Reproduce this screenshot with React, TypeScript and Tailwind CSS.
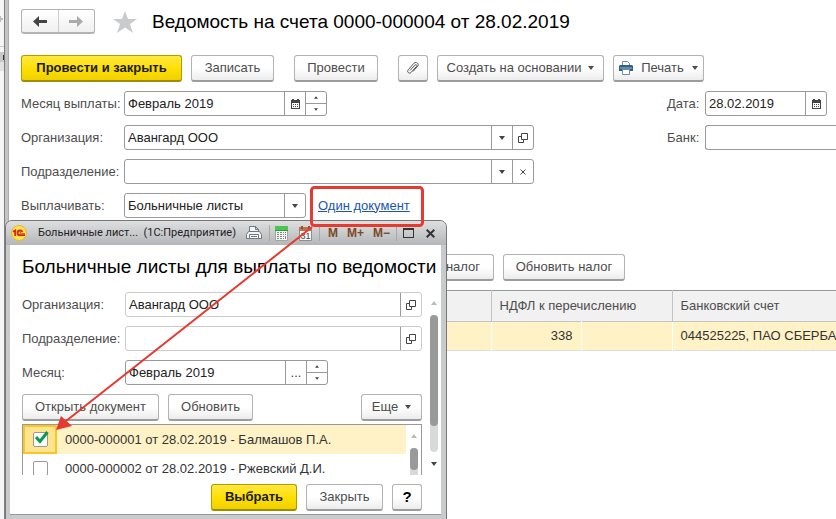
import type { ReactNode } from 'react'
import clsx from 'clsx'

const BUTTON =
  'flex h-[27px] shrink-0 items-center justify-center rounded-[3px] border border-b-2 whitespace-nowrap'
const PLAIN = 'border-[#b3b3b3] border-b-[#9c9c9c] bg-linear-to-b from-white from-50% to-[#ececec] text-[#4d4d4d]'
const YELLOW = 'border-[#b39b00] border-b-[#a08c00] bg-linear-to-b from-[#ffe838] via-[#ffe000] to-[#f0d000] font-bold text-[#1a1a1a]'

type ButtonProps = {
  children: ReactNode
  className?: string
  primary?: boolean
  label?: string
}

function Button({ children, className, primary, label }: ButtonProps) {
  return (
    <button type="button" aria-label={label} className={clsx(BUTTON, primary ? YELLOW : PLAIN, className)}>
      {children}
    </button>
  )
}

function Caret({ up, small, className }: { up?: boolean; small?: boolean; className?: string }) {
  return (
    <svg
      viewBox="0 0 6 4"
      width={small ? 4 : 6}
      height={small ? 3 : 4}
      className={clsx('shrink-0', className)}
      fill="currentColor"
      aria-hidden="true"
    >
      <path d={up ? 'M0 4h6L3 0z' : 'M0 0h6L3 4z'} />
    </svg>
  )
}

function CalendarIcon() {
  return (
    <svg viewBox="0 0 9 10" width="9" height="10" aria-hidden="true" shapeRendering="crispEdges">
      <path fill="#444" d="M0 1h1V0h2v1h3V0h2v1h1v2H0zM0 4h1v5h7V4h1v6H0zM0 3h9v1H0z" />
      <path fill="#444" d="M2 5h1v1H2zM4 5h1v1H4zM6 5h1v1H6zM2 7h1v1H2zM4 7h1v1H4zM6 7h1v1H6z" />
    </svg>
  )
}

function OpenIcon() {
  return (
    <svg viewBox="0 0 10 10" width="10" height="10" fill="none" stroke="#444" aria-hidden="true">
      <path d="M3.500.5h6v6h-6zM3 3.500H.5v6h5V7" />
    </svg>
  )
}

function SideButton({ label, children }: { label: string; children: ReactNode }) {
  return (
    <button
      type="button"
      aria-label={label}
      className="flex w-[21px] shrink-0 items-center justify-center border-l border-[#999] text-[#444]"
    >
      {children}
    </button>
  )
}

function Spinner() {
  return (
    <span className="flex w-[21px] shrink-0 flex-col border-l border-[#999] text-[#444]">
      <button type="button" aria-label="Увеличить" className="flex flex-1 items-center justify-center border-b border-[#999]">
        <Caret up small />
      </button>
      <button type="button" aria-label="Уменьшить" className="flex flex-1 items-center justify-center">
        <Caret small />
      </button>
    </span>
  )
}

type FieldProps = {
  id: string
  label: string
  value?: string
  labelClass?: string
  boxClass?: string
  children?: ReactNode
}

function Field({ id, label, value = '', labelClass = 'w-[103px]', boxClass, children }: FieldProps) {
  return (
    <div className="flex items-center">
      <label htmlFor={id} className={clsx('shrink-0 whitespace-nowrap', labelClass)}>
        {label}
      </label>
      <div className={clsx('flex h-[25px] rounded-[3px] border bg-white', boxClass)}>
        <input id={id} defaultValue={value} className="min-w-0 flex-1 bg-transparent px-[3px] text-[#222] outline-none" />
        {children}
      </div>
    </div>
  )
}

function TitleIcons() {
  return (
    <>
      <button type="button" aria-label="Печать" className="mr-[7px]">
        <svg viewBox="0 0 16 14" width="16" height="14" fill="#f4f5f6" stroke="#6b7680" aria-hidden="true">
          <path d="M3.500 6V.5h6l3 3V6M9.500.5v3h3" />
          <path d="M2.500 5.500h11l2 3v4H.5v-4z" />
          <path d="M3.500 8.500h9v4h-9z" fill="#fff" />
          <path d="M5 10.500h6" />
        </svg>
      </button>
      <span className="mr-[5px] h-4 w-px bg-[#a8a8a8]" />
      <button type="button" aria-label="Калькулятор" className="mr-[11px]">
        <svg viewBox="0 0 13 15" width="13" height="15" aria-hidden="true">
          <path fill="#f3f5f4" stroke="#9aa89f" d="M.5.5h12v14H.5z" />
          <path fill="#4cc653" d="M0 0h13v4H0z" />
          <path fill="#2f9c3a" d="M0 4h13v1H0z" />
          <path fill="#7d8a83" d="M2 6h2v1H2zM5 6h2v1H5zM2 8h2v1H2zM5 8h2v1H5zM2 10h2v1H2zM5 10h2v1H5zM2 12h2v1H2zM5 12h2v1H5zM8 6h1v1H8zM8 8h1v1H8zM8 10h1v1H8zM8 12h1v1H8z" />
          <path fill="#d9463b" d="M10 6h1v1h-1zM10 8h1v1h-1z" />
          <path fill="#7d8a83" d="M10 10h1v3h-1z" />
        </svg>
      </button>
      <button type="button" aria-label="Календарь" className="mr-[7px]">
        <svg viewBox="0 0 13 15" width="13" height="15" aria-hidden="true">
          <path fill="#f8f8f8" stroke="#8a8f94" d="M.5 1.500h12v13H.5z" />
          <path fill="#b9744b" d="M0 1h13v4H0z" />
          <path fill="#8f5735" d="M2 0h2v3H2zM9 0h2v3H9z" />
          <text x="6.500" y="13" textAnchor="middle" fontSize="9" fontFamily="Liberation Sans, sans-serif" fill="#444">
            31
          </text>
        </svg>
      </button>
      <span className="mr-[8px] h-4 w-px bg-[#a8a8a8]" />
    </>
  )
}

function Popup() {
  return (
    <section
      aria-labelledby="popup-title"
      className="absolute top-[220px] left-[5px] flex w-[442px] flex-col rounded-t-[7px] border border-[#777] bg-[#c9cacb]"
    >
      <header className="flex h-[24px] items-center rounded-t-[6px] bg-linear-to-b from-[#dedfe0] to-[#b5b6b8] pr-[11px] pl-[5px] font-[Roboto,'Noto_Sans',sans-serif] text-[11px] text-[#222]">
        <svg viewBox="0 0 16 16" width="16" height="16" className="mr-[11px] shrink-0" aria-hidden="true">
          <circle cx="8" cy="8" r="7.500" fill="#fde34c" stroke="#e3b93a" />
          <path
            fill="none"
            stroke="#d8231f"
            strokeWidth="1.800"
            d="M2 6.800l2.200-1.300V11M11.300 7.200c-.3-1.200-1.200-1.700-2.200-1.700-1.500 0-2.500 1-2.500 2.400s1 2.300 2.500 2.300H14"
          />
          <path fill="none" stroke="#d8231f" strokeWidth=".8" d="M10 7.500c-1-.6-1.800.9-.7 1.200H14" />
        </svg>
        <span className="flex-1 whitespace-pre">Больничные лист...  (1С:Предприятие)</span>
        <TitleIcons />
        <span className="flex gap-[9px] font-['Liberation_Sans',Arial,sans-serif] text-[12px] font-bold text-[#7a4a26]">
          <button type="button">M</button>
          <button type="button">M+</button>
          <button type="button">M−</button>
        </span>
        <span className="mx-[6px] h-4 w-px bg-[#a8a8a8]" />
        <button type="button" aria-label="Развернуть" className="h-[10px] w-[11px] border border-t-2 border-[#333]" />
        <button type="button" aria-label="Закрыть окно" className="ml-[12px]">
          <svg viewBox="0 0 9 9" width="9" height="9" stroke="#333" strokeWidth="2" aria-hidden="true">
            <path d="M.7.7l7.600 7.600M8.300.7L.7 8.300" />
          </svg>
        </button>
      </header>

      <div className="mr-[5px] mb-[5px] ml-[4px] flex flex-col border-b border-[#999] bg-white pb-[3px] pl-[12px]">
        <h2 id="popup-title" className="mt-[10px] text-[19px] leading-[24px] whitespace-nowrap text-black">
          Больничные листы для выплаты по ведомости
        </h2>

        <div className="mt-[13px] flex">
          <div className="flex w-[400px] flex-col">
            <div className="flex flex-col gap-[9px]">
              <Field id="p-org" label="Организация:" value="Авангард ООО" boxClass="flex-1 border-[#ccc]">
                <SideButton label="Открыть организацию">
                  <OpenIcon />
                </SideButton>
              </Field>
              <Field id="p-dep" label="Подразделение:" boxClass="flex-1 border-[#ccc]">
                <SideButton label="Открыть подразделение">
                  <OpenIcon />
                </SideButton>
              </Field>
              <Field id="p-month" label="Месяц:" value="Февраль 2019" boxClass="w-[203px] border-[#999]">
                <SideButton label="Выбрать месяц">...</SideButton>
                <Spinner />
              </Field>
            </div>

            <div className="mt-[9px] flex gap-[9px]">
              <Button className="w-[137px]">Открыть документ</Button>
              <Button className="w-[85px]">Обновить</Button>
              <Button className="ml-auto w-[61px] gap-[7px]">
                Еще
                <Caret />
              </Button>
            </div>

            <div className="mt-[3px] flex h-[51px] overflow-hidden border-x border-t border-[#999]">
              <ul className="flex-1">
                <li className="flex h-[29px] items-center bg-[#fff2c7]">
                  <span className="relative flex h-full w-[34px] items-center justify-center border-2 border-[#fcc526] bg-[#ffe48f]">
                    <input
                      id="doc-1"
                      type="checkbox"
                      defaultChecked
                      className="size-[15px] appearance-none rounded-[2px] border border-[#999] bg-white"
                    />
                    <svg
                      viewBox="0 0 14 13"
                      width="14"
                      height="13"
                      fill="none"
                      stroke="#0b9a4a"
                      strokeWidth="3"
                      className="pointer-events-none absolute top-[4px] left-[10px]"
                      aria-hidden="true"
                    >
                      <path d="M1 6l4 4.500L12.500 1" />
                    </svg>
                  </span>
                  <label htmlFor="doc-1" className="ml-[8px] text-[#333]">
                    0000-000001 от 28.02.2019 - Балмашов П.А.
                  </label>
                </li>
                <li className="flex h-[29px] items-center">
                  <span className="flex h-full w-[34px] items-center justify-center">
                    <input
                      id="doc-2"
                      type="checkbox"
                      className="size-[15px] appearance-none rounded-[2px] border border-[#999] bg-white"
                    />
                  </span>
                  <label htmlFor="doc-2" className="ml-[8px] text-[#333]">
                    0000-000002 от 28.02.2019 - Ржевский Д.И.
                  </label>
                </li>
              </ul>
              <div className="flex w-[15px] flex-col items-center pt-[9px]">
                <Caret up className="text-[#bbb]" />
                <div className="mt-[10px] flex-1 rounded-t-full bg-[#d9d9d9]">
                  <div className="h-[22px] w-[8px] rounded-full bg-[#999]" />
                </div>
              </div>
            </div>

            <div className="mt-[9px] flex justify-end gap-[9px]">
              <Button primary className="w-[86px]">
                Выбрать
              </Button>
              <Button className="w-[77px]">Закрыть</Button>
              <Button className="w-[30px] text-[15px] font-bold text-black">?</Button>
            </div>
          </div>

          <div className="ml-[8px] flex flex-col items-center pt-[9px]">
            <Caret up className="text-[#bbb]" />
            <div className="mt-[10px] h-[137px] rounded-full bg-[#d9d9d9]">
              <div className="h-[111px] w-[8px] rounded-full bg-[#999]" />
            </div>
            <Caret className="mt-[10px] text-[#444]" />
          </div>
        </div>
      </div>
    </section>
  )
}

export default function App() {
  return (
    <div className="relative flex h-screen overflow-hidden bg-white font-['Liberation_Sans',Arial,sans-serif] text-[13px] leading-[16px] text-[#4d4d4d]">
      <aside className="flex w-[9px] shrink-0 border-r border-[#ababab]">
        <div className="flex w-[4px] flex-col bg-[#f6f6f6]">
          <svg viewBox="0 0 4 8" width="4" height="8" className="mt-[15px]" fill="#bbb" aria-hidden="true">
            <path d="M0 3h3v2H0zM0 1h1v6H0z" />
          </svg>
          <span className="mt-[23px] h-px bg-[#ccc]" />
          <span className="mt-[5px] flex h-[10px] items-center justify-end bg-[#c8c8c8]">
            <span className="h-[5px] w-px bg-[#333]" />
          </span>
          <span className="h-[9px] bg-[#e2e2e2]" />
        </div>
        <div className="flex-1 border-l border-[#808080] bg-[#c4c4c4]" />
      </aside>

      <main className="flex min-w-0 flex-1 flex-col pt-[9px] pl-[12px]">
        <div className="flex items-center">
          <div className="flex h-[25px] w-[74px] rounded-[3px] border border-b-2 border-[#b3b3b3] bg-linear-to-b from-white to-[#f0f0f0]">
            <button type="button" aria-label="Назад" className="flex flex-1 items-center justify-center border-r border-[#ccc]">
              <svg viewBox="0 0 14 11" width="14" height="11" fill="#444" aria-hidden="true">
                <path d="M0 5.500L6 0v4h8v3H6v4z" />
              </svg>
            </button>
            <button type="button" aria-label="Вперед" className="flex flex-1 items-center justify-center">
              <svg viewBox="0 0 14 11" width="14" height="11" fill="#aaa" aria-hidden="true">
                <path d="M14 5.500L8 0v4H0v3h8v4z" />
              </svg>
            </button>
          </div>
          <button type="button" aria-label="В избранное" className="ml-[18px]">
            <svg viewBox="0 0 24 22" width="24" height="22" fill="#c8cacc" aria-hidden="true">
              <path d="M12 0l3 8h9l-7 5 3 9-8-5.500L4 22l3-9-7-5h9z" />
            </svg>
          </button>
          <h1 className="ml-[15px] text-[19px] leading-[24px] whitespace-nowrap text-black">
            Ведомость на счета 0000-000004 от 28.02.2019
          </h1>
        </div>

        <div className="mt-[21px] flex">
          <Button primary className="w-[161px]">
            Провести и закрыть
          </Button>
          <Button className="ml-[9px] w-[83px]">Записать</Button>
          <Button className="ml-[20px] w-[84px]">Провести</Button>
          <Button className="ml-[20px] w-[30px]" label="Вложения">
            <svg viewBox="0 0 14 14" width="14" height="14" fill="none" stroke="#555" aria-hidden="true">
              <path d="M4 9.500l5-5.500c1-1 2.500.2 1.500 1.400L5 11.500c-1.700 1.700-4.500-.5-2.800-2.700L8 2.200c2-2 5.500.5 3.700 3L7 10.500" />
            </svg>
          </Button>
          <Button className="ml-[9px] w-[167px] gap-[7px]">
            Создать на основании
            <Caret />
          </Button>
          <Button className="ml-[9px] w-[91px] gap-[8px]">
            <svg viewBox="0 0 14 14" width="14" height="14" aria-hidden="true">
              <path d="M3.500 5V.5h5l2 2V5" fill="#fff" stroke="#6f8ba3" />
              <path d="M1 4h12l1 1v5H0V5z" fill="#2f5f8a" />
              <path d="M1 7h12" stroke="#9db7cc" />
              <path d="M3.500 8.500h7v5h-7z" fill="#fff" stroke="#6f8ba3" />
            </svg>
            Печать
            <Caret />
          </Button>
        </div>

        <div className="mt-[9px] flex justify-between">
          <div className="flex flex-col gap-[9px]">
            <Field id="month" label="Месяц выплаты:" value="Февраль 2019" boxClass="w-[203px] border-[#999]">
              <SideButton label="Календарь">
                <CalendarIcon />
              </SideButton>
              <Spinner />
            </Field>
            <Field id="org" label="Организация:" value="Авангард ООО" boxClass="w-[410px] border-[#999]">
              <SideButton label="Список организаций">
                <Caret />
              </SideButton>
              <SideButton label="Открыть">
                <OpenIcon />
              </SideButton>
            </Field>
            <Field id="dep" label="Подразделение:" boxClass="w-[410px] border-[#999]">
              <SideButton label="Список подразделений">
                <Caret />
              </SideButton>
              <SideButton label="Очистить">
                <svg viewBox="0 0 6 6" width="6" height="6" stroke="#444" aria-hidden="true">
                  <path d="M.5.5l5 5M5.500.5l-5 5" />
                </svg>
              </SideButton>
            </Field>
            <div className="flex items-center">
              <label htmlFor="pay" className="w-[103px]">
                Выплачивать:
              </label>
              <div className="relative flex h-[25px] w-[182px] rounded-[3px] border border-[#999]">
                <select id="pay" className="flex-1 appearance-none bg-transparent px-[3px] text-[#222] outline-none">
                  <option>Больничные листы</option>
                </select>
                <span className="pointer-events-none absolute inset-y-0 right-0 flex w-[21px] items-center justify-center border-l border-[#999] text-[#444]">
                  <Caret />
                </span>
              </div>
              <a href="#document" className="ml-[12px] text-[#1c55ae] underline">
                Один документ
              </a>
            </div>
          </div>

          <div className="flex w-[169px] shrink-0 flex-col gap-[9px]">
            <Field id="date" label="Дата:" value="28.02.2019" labelClass="w-[38px]" boxClass="w-[122px] border-[#999]">
              <SideButton label="Выбрать дату">
                <CalendarIcon />
              </SideButton>
            </Field>
            <Field id="bank" label="Банк:" labelClass="w-[38px]" boxClass="flex-1 rounded-r-none border-r-0 border-[#999]" />
          </div>
        </div>

        <div className="mt-[36px] ml-[412px] flex gap-[9px]">
          <Button className="w-[61px] justify-end pr-[13px]">налог</Button>
          <Button className="w-[122px]">Обновить налог</Button>
        </div>

        <table className="mt-[9px] w-full table-fixed border-collapse border-t border-[#999] text-left">
          <colgroup>
            <col className="w-[470px]" />
            <col className="w-[90px]" />
            <col className="w-[91px]" />
            <col />
          </colgroup>
          <thead>
            <tr className="h-[31px] border-b border-[#c4c4c4] bg-[#f1f1f1]">
              <th className="border-r border-[#c4c4c4]" />
              <th colSpan={2} className="border-r border-[#c4c4c4] pl-[8px] font-normal whitespace-nowrap">
                НДФЛ к перечислению
              </th>
              <th className="pl-[8px] font-normal whitespace-nowrap">Банковский счет</th>
            </tr>
          </thead>
          <tbody>
            <tr className="h-[29px] border-b border-[#ddd] bg-[#fff2c7] text-[#333]">
              <td className="border-r border-white" />
              <td className="border-r border-white pr-[8px] text-right">338</td>
              <td className="border-r border-white" />
              <td className="overflow-hidden pl-[8px] whitespace-nowrap">044525225, ПАО СБЕРБАНК</td>
            </tr>
          </tbody>
        </table>
      </main>

      <Popup />

      <svg className="pointer-events-none absolute top-[185px] left-[50px] h-[250px] w-[380px]" fill="none" stroke="#e6392f" aria-hidden="true">
        <rect x="261.500" y="2.500" width="111" height="38" rx="3" strokeWidth="3" />
        <path d="M262 42L16 236" strokeWidth="2" />
        <path d="M6 245l5-14 11 10z" fill="#e6392f" stroke="none" />
      </svg>
    </div>
  )
}
